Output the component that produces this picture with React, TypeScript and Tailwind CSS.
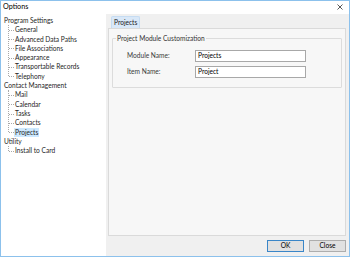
const tree: { label: string; children: string[] }[] = [
  {
    label: "Program Settings",
    children: ["General", "Advanced Data Paths", "File Associations", "Appearance", "Transportable Records", "Telephony"],
  },
  { label: "Contact Management", children: ["Mail", "Calendar", "Tasks", "Contacts", "Projects"] },
  { label: "Utility", children: ["Install to Card"] },
];

function TreeGroup({ label, children }: { label: string; children: string[] }) {
  return (
    <div>
      <div className="h-[9.3px] leading-[9.3px] pl-[3px]">{label}</div>
      <div className="relative">
        {/* vertical dotted line, stops at the middle of the last child */}
        <div className="absolute left-[7px] top-0 w-0 border-l border-dotted border-[#a8a8a8]" style={{ height: (children.length - 1) * 9.3 + 4.6 }} />
        {children.map((c) => (
          <div key={c} className="relative h-[9.3px] flex items-center pl-[14px]">
            <div className="absolute left-[8px] top-[4.6px] w-[5px] border-t border-dotted border-[#a8a8a8]" />
            <span
              className={
                c === "Projects"
                  ? "leading-[9.3px] px-[1px] bg-[#cce8ff] -ml-[1px]"
                  : "leading-[9.3px]"
              }
            >
              {c}
            </span>
          </div>
        ))}
      </div>
    </div>
  );
}

function Field({ label, value }: { label: string; value: string }) {
  return (
    <div className="flex items-center h-[12px]">
      <div className="w-[82px] pl-[14px] text-[#3a3a3a]">{label}</div>
      <div className="w-[111px] h-[12px] border border-[#a8a8a8] bg-white flex items-center pl-[2px] text-black">
        {value}
      </div>
    </div>
  );
}

export default function App() {
  return (
    <div
      className="w-[350px] h-[257px] border border-[#8cc1ec] bg-white flex flex-col text-[6.6px] text-[#262626] overflow-hidden"
      style={{ fontFamily: 'Lato, "Noto Sans", sans-serif' }}
    >
      <div className="h-[13px] flex items-center justify-between pl-[2px] pr-[6px] shrink-0">
        <span className="text-[7.2px] text-black">Options</span>
        <svg width="6" height="6" viewBox="0 0 6 6" className="mt-[-1px]">
          <path d="M0.5 0.5 L5.5 5.5 M5.5 0.5 L0.5 5.5" stroke="#444" strokeWidth="0.9" />
        </svg>
      </div>

      <div className="flex flex-1 min-h-0">
        <div className="w-[105px] bg-white pt-[2px] shrink-0">
          {tree.map((g) => (
            <TreeGroup key={g.label} label={g.label} children={g.children} />
          ))}
        </div>

        <div className="flex-1 bg-[#f0f0f0] flex flex-col pl-[2px] pr-[3px] pt-[2px]">
          <div className="flex pl-[3px]">
            <div className="h-[12px] px-[2px] bg-[#d9e8f8] border border-b-0 border-[#c6dcf2] rounded-t-[2px] flex items-center text-[#1a1a1a]">
              Projects
            </div>
          </div>
          <div className="h-[208px] border border-[#dadada] bg-[#f7f7f7] px-[3px] pt-[9px]">
            <div className="relative border border-[#dcdcdc] rounded-[1px] h-[50px] pt-[11px] flex flex-col gap-[4px]">
              <span className="absolute -top-[5px] left-[3px] bg-[#f7f7f7] px-[1px] leading-[9px] text-[#333]">
                Project Module Customization
              </span>
              <Field label="Module Name:" value="Projects" />
              <Field label="Item Name:" value="Project" />
            </div>
          </div>
          <div className="flex justify-end gap-[5px] pt-[4px] pr-[0px]">
            <button className="w-[37px] h-[12px] bg-[#e1e1e1] border border-[#3a86c8] text-[6.6px] text-black flex items-center justify-center">
              OK
            </button>
            <button className="w-[37px] h-[12px] bg-[#e1e1e1] border border-[#adadad] text-[6.6px] text-black flex items-center justify-center">
              Close
            </button>
          </div>
        </div>
      </div>
    </div>
  );
}
